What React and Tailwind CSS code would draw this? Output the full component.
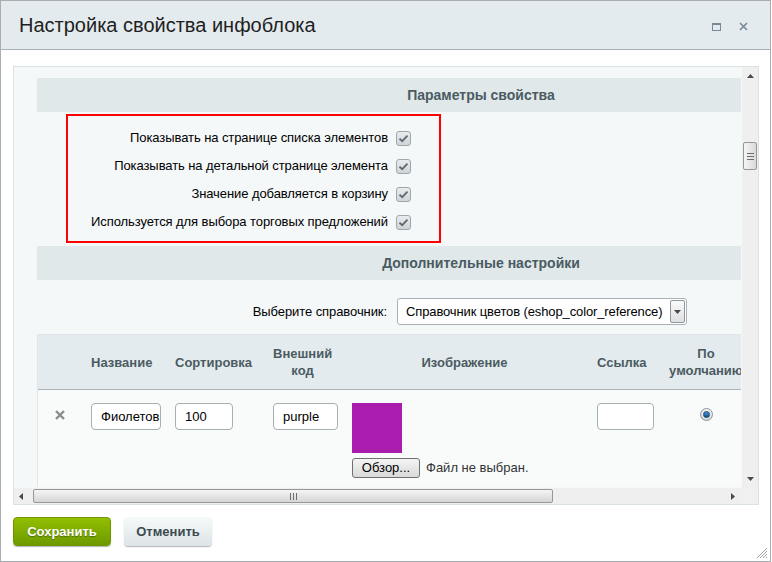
import React from "react";

function CheckBox() {
  return (
    <div className="w-[15px] h-[15px] rounded-[3px] border border-[#9ea7ab] bg-linear-to-b from-[#e9ecee] to-[#cdd4d7] flex items-center justify-center">
      <svg width="11" height="9" viewBox="0 0 11 9">
        <path d="M1.5 4.6 L4.2 7.2 L9.5 1.6" fill="none" stroke="#5f686d" strokeWidth="1.8" />
      </svg>
    </div>
  );
}

function Row({ label }) {
  return (
    <div className="flex h-[28px] items-center">
      <div className="w-[355px] pr-[4px] text-right text-[13px] tracking-[-0.08px] text-black">{label}</div>
      <div className="pl-[4px]">
        <CheckBox />
      </div>
    </div>
  );
}

function Band({ children }) {
  return (
    <div className="h-[34px] bg-[#e0e8ea] text-center text-[14px] font-bold leading-[34px] text-[#4b5b62]">
      {children}
    </div>
  );
}

function Input({ value, w }) {
  return (
    <div
      className="h-[27px] rounded-[4px] border border-[#a5afb4] bg-white pl-[9px] text-[13px] leading-[25px] text-black overflow-hidden whitespace-nowrap"
      style={{ width: w }}
    >
      {value}
    </div>
  );
}

function Arrow({ dir }) {
  const paths = {
    up: "M0 4 L3.5 0 L7 4 Z",
    down: "M0 0 L7 0 L3.5 4 Z",
    left: "M4 0 L4 7 L0 3.5 Z",
    right: "M0 0 L4 3.5 L0 7 Z",
  };
  const vertical = dir === "up" || dir === "down";
  return (
    <svg width={vertical ? 7 : 4} height={vertical ? 4 : 7} viewBox={vertical ? "0 0 7 4" : "0 0 4 7"}>
      <path d={paths[dir]} fill="#4a4a4a" />
    </svg>
  );
}

export default function App() {
  return (
    <div className="w-[772px] h-[562px] bg-white font-['Liberation_Sans',Arial,sans-serif]">
      <div className="relative flex h-[562px] w-[771px] flex-col border border-[#a9adaf] bg-white">
        {/* Title bar */}
        <div className="flex h-[49px] items-center justify-between border-b border-[#a9afb2] bg-[#e4ebee] pl-[18px] pr-[22px]">
          <div className="text-[20px] text-[#1f1f1f]">Настройка свойства инфоблока</div>
          <div className="flex items-center gap-[18px] pt-[3px]">
            <div className="h-[8px] w-[9px] border border-t-2 border-[#7a8996]" />
            <svg width="9" height="9" viewBox="0 0 9 9">
              <path d="M1 1 L8 8 M8 1 L1 8" stroke="#7a8996" strokeWidth="1.7" />
            </svg>
          </div>
        </div>

        {/* Body */}
        <div className="pl-[12px] pt-[16px]">
          <div className="flex h-[439px] w-[746px] flex-col border border-[#dae2e5] bg-[#f5f8f9]">
            <div className="flex h-[420px]">
              {/* Scroll area */}
              <div className="relative h-[420px] w-[727px] overflow-hidden">
                <div className="w-[934px] pl-[23px] pt-[11px]">
                  <div className="w-[888px]">
                    <Band>Параметры свойства</Band>
                    <div className="pb-[10px] pt-[12px]">
                      <Row label="Показывать на странице списка элементов" />
                      <Row label="Показывать на детальной странице элемента" />
                      <Row label="Значение добавляется в корзину" />
                      <Row label="Используется для выбора торговых предложений" />
                    </div>
                    <Band>Дополнительные настройки</Band>
                    <div className="flex items-center pb-[9px] pt-[18px]">
                      <div className="w-[355px] pr-[5px] text-right text-[13px] tracking-[-0.08px] text-black">Выберите справочник:</div>
                      <div className="pl-[5px]">
                        <div className="flex h-[27px] w-[290px] items-center justify-between rounded-[3px] border border-[#a8b2b7] bg-white pl-[8px] pr-[1px]">
                          <span className="text-[13px] tracking-[-0.12px] text-black whitespace-nowrap">Справочник цветов (eshop_color_reference)</span>
                          <div className="flex h-[23px] w-[15px] items-center justify-center rounded-[2px] border border-[#8f989c] bg-linear-to-b from-[#fbfbfb] to-[#dcdfe1]">
                            <Arrow dir="down" />
                          </div>
                        </div>
                      </div>
                    </div>

                    {/* Values table */}
                    <div className="border-l border-t border-[#dfe5e8]">
                      <div className="flex h-[55px] items-center border-b border-[#abb4b8] bg-[#e4ebee] text-[13px] font-bold leading-[17px] text-[#4b5b62]">
                        <div className="w-[43px]" />
                        <div className="w-[84px] pl-[10px]">Название</div>
                        <div className="w-[98px] pl-[10px]">Сортировка</div>
                        <div className="w-[85px] pl-[10px]">
                          <div className="w-[59px] text-center">Внешний<br />код</div>
                        </div>
                        <div className="w-[233px] text-center">Изображение</div>
                        <div className="w-[80px] pl-[16px]">Ссылка</div>
                        <div className="w-[90px] text-center">По<br />умолчанию</div>
                      </div>
                      <div className="flex h-[120px] items-start bg-[#f9fbfb]">
                        <div className="flex w-[43px] justify-center pt-[20px]">
                          <svg width="10" height="10" viewBox="0 0 10 10">
                            <path d="M1 1 L9 9 M9 1 L1 9" stroke="#878c90" strokeWidth="2.4" />
                          </svg>
                        </div>
                        <div className="w-[84px] pl-[10px] pt-[13px]">
                          <Input value="Фиолетовый" w={70} />
                        </div>
                        <div className="w-[98px] pl-[10px] pt-[13px]">
                          <Input value="100" w={58} />
                        </div>
                        <div className="w-[85px] pl-[10px] pt-[13px]">
                          <Input value="purple" w={65} />
                        </div>
                        <div className="w-[233px] pl-[4px] pt-[13px]">
                          <div className="h-[50px] w-[50px] bg-[#a81cae]" />
                          <div className="mt-[5px] flex items-center">
                            <div className="flex h-[20px] w-[68px] items-center justify-center rounded-[3px] border border-[#707070] bg-linear-to-b from-[#f4f4f4] to-[#dadada] text-[13px] text-black">
                              Обзор...
                            </div>
                            <span className="ml-[6px] text-[13px] text-[#333]">Файл не выбран.</span>
                          </div>
                        </div>
                        <div className="w-[80px] pl-[16px] pt-[13px]">
                          <Input value="" w={57} />
                        </div>
                        <div className="flex w-[90px] justify-center pt-[18px]">
                          <div className="flex h-[13px] w-[13px] items-center justify-center rounded-full border border-[#8a9399] bg-linear-to-b from-[#f4f4f4] to-[#d4d8db]">
                            <div className="h-[7px] w-[7px] rounded-full bg-linear-to-b from-[#4b9be0] to-[#0b4f8e] border border-[#1c4468]" />
                          </div>
                        </div>
                      </div>
                    </div>
                  </div>
                </div>

                {/* red highlight annotation */}
                <div className="absolute left-[52px] top-[47px] h-[129px] w-[375px] border-2 border-[#ff0000]" />
              </div>

              {/* Vertical scrollbar */}
              <div className="flex h-[420px] w-[17px] flex-col items-center bg-[#efefef] border-l border-[#f7f7f7]">
                <div className="pt-[7px]"><Arrow dir="up" /></div>
                <div className="mt-[64px] flex h-[28px] w-[14px] flex-col items-center justify-center gap-[2px] rounded-[2px] border border-[#979797] bg-linear-to-r from-[#f5f5f5] to-[#d9d9d9]">
                  <div className="h-px w-[7px] bg-[#6c6c6c]" />
                  <div className="h-px w-[7px] bg-[#6c6c6c]" />
                  <div className="h-px w-[7px] bg-[#6c6c6c]" />
                </div>
                <div className="flex-1" />
                <div className="pb-[6px]"><Arrow dir="down" /></div>
              </div>
            </div>

            {/* Horizontal scrollbar */}
            <div className="flex h-[17px]">
              <div className="flex h-[17px] w-[727px] items-center bg-[#efefef] border-t border-[#f7f7f7]">
                <div className="pl-[5px]"><Arrow dir="left" /></div>
                <div className="ml-[10px] flex h-[14px] w-[520px] items-center justify-center gap-[2px] rounded-[2px] border border-[#979797] bg-linear-to-b from-[#f5f5f5] to-[#d6d6d6]">
                  <div className="h-[7px] w-px bg-[#6c6c6c]" />
                  <div className="h-[7px] w-px bg-[#6c6c6c]" />
                  <div className="h-[7px] w-px bg-[#6c6c6c]" />
                </div>
                <div className="flex-1" />
                <div className="pr-[6px]"><Arrow dir="right" /></div>
              </div>
              <div className="h-[17px] w-[17px] bg-[#f0f0f0]" />
            </div>
          </div>

          {/* Buttons */}
          <div className="mt-[12px] flex gap-[13px]">
            <div className="flex h-[29px] w-[98px] items-center justify-center rounded-[4px] border border-[#6f9700] bg-linear-to-b from-[#92bf00] to-[#6e9a00] text-[13px] font-bold text-white shadow-[0_1px_1px_rgba(0,0,0,0.3)] [text-shadow:0_1px_1px_rgba(0,0,0,0.35)]">
              Сохранить
            </div>
            <div className="flex h-[29px] w-[88px] items-center justify-center rounded-[4px] bg-linear-to-b from-[#f7fafa] to-[#dce4e7] text-[13px] font-bold text-[#3d4a50] shadow-[0_1px_1px_rgba(0,0,0,0.3)]">
              Отменить
            </div>
          </div>
        </div>

        {/* resize grip */}
        <svg className="absolute bottom-[2px] right-[2px]" width="12" height="12" viewBox="0 0 12 12">
          <path d="M11 1 L1 11 M11 4 L4 11 M11 7 L7 11 M11 10 L10 11" stroke="#a0a0a0" strokeWidth="1" />
        </svg>
      </div>
    </div>
  );
}
